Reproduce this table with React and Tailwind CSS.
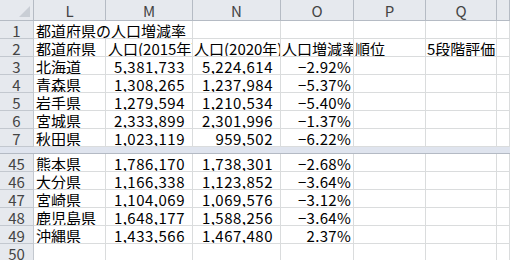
const grid = "grid grid-cols-[34px_72px_87px_88px_73px_72px_71px_1fr]";
const font = { fontFamily: '"Noto Sans CJK JP", "Noto Sans", sans-serif' };

const topRows = [
  ["3", "北海道", "5,381,733", "5,224,614", "−2.92%"],
  ["4", "青森県", "1,308,265", "1,237,984", "−5.37%"],
  ["5", "岩手県", "1,279,594", "1,210,534", "−5.40%"],
  ["6", "宮城県", "2,333,899", "2,301,996", "−1.37%"],
  ["7", "秋田県", "1,023,119", "959,502", "−6.22%"],
];

const bottomRows = [
  ["45", "熊本県", "1,786,170", "1,738,301", "−2.68%"],
  ["46", "大分県", "1,166,338", "1,123,852", "−3.64%"],
  ["47", "宮崎県", "1,104,069", "1,069,576", "−3.12%"],
  ["48", "鹿児島県", "1,648,177", "1,588,256", "−3.64%"],
  ["49", "沖縄県", "1,433,566", "1,467,480", "2.37%"],
  ["50", "", "", "", ""],
];

const cell = "h-[18px] border-r border-b border-[#dadcdd] overflow-hidden whitespace-nowrap leading-[15px] pt-[2px]";
const rowHead = "h-[18px] bg-[#e6e9ee] border-r border-b border-[#c3c8cf] text-center text-[#444] leading-[15px] pt-[2px]";

function DataRow({ r }) {
  return (
    <div className={grid}>
      <div className={rowHead}>{r[0]}</div>
      <div className={`${cell} pl-[2px]`}>{r[1]}</div>
      <div className={`${cell} text-right pr-[7px] tracking-[0.5px]`}>{r[2]}</div>
      <div className={`${cell} text-right pr-[7px] tracking-[0.5px]`}>{r[3]}</div>
      <div className={`${cell} text-right pr-[2px] tracking-[0.3px]`}>{r[4]}</div>
      <div className={cell}></div>
      <div className={cell}></div>
      <div className={cell}></div>
    </div>
  );
}

export default function App() {
  return (
    <div className="w-[510px] h-[260px] overflow-hidden bg-white text-[15px] text-black" style={font}>
      {/* column headers */}
      <div className={grid}>
        <div className="relative h-[21px] bg-[#e6e9ee] border-r border-b border-[#b5bbc4]">
          <div className="absolute right-[3px] bottom-[3px] w-0 h-0 border-l-[11px] border-l-transparent border-b-[11px] border-b-[#c9ced5]" />
        </div>
        {["L", "M", "N", "O", "P", "Q", ""].map((c, i) => (
          <div
            key={i}
            className="h-[21px] bg-[#e6e9ee] border-r border-b border-[#b5bbc4] text-center text-[#444] leading-[19px] pt-[1px]"
          >
            {c}
          </div>
        ))}
      </div>

      {/* row 1 */}
      <div className={grid}>
        <div className={rowHead}>1</div>
        <div className={`${cell} col-span-2 pl-[2px]`}>都道府県の人口増減率</div>
        <div className={cell}></div>
        <div className={cell}></div>
        <div className={cell}></div>
        <div className={cell}></div>
        <div className={cell}></div>
      </div>

      {/* row 2 */}
      <div className={grid}>
        <div className={rowHead}>2</div>
        <div className={`${cell} pl-[2px]`}>都道府県</div>
        <div className={`${cell} pl-[2px]`}>人口(2015年)</div>
        <div className={`${cell} pl-[1px]`}>人口(2020年)</div>
        <div className={`${cell} pl-[1px]`}>人口増減率</div>
        <div className={`${cell} pl-[1px]`}>順位</div>
        <div className={`${cell} pl-[1px]`}>5段階評価</div>
        <div className={cell}></div>
      </div>

      {topRows.map((r) => (
        <DataRow key={r[0]} r={r} />
      ))}

      {/* split band */}
      <div className="h-[7px] bg-[#dfe4ee] border-b border-[#b4bac4]" />

      {bottomRows.map((r) => (
        <DataRow key={r[0]} r={r} />
      ))}
    </div>
  );
}
